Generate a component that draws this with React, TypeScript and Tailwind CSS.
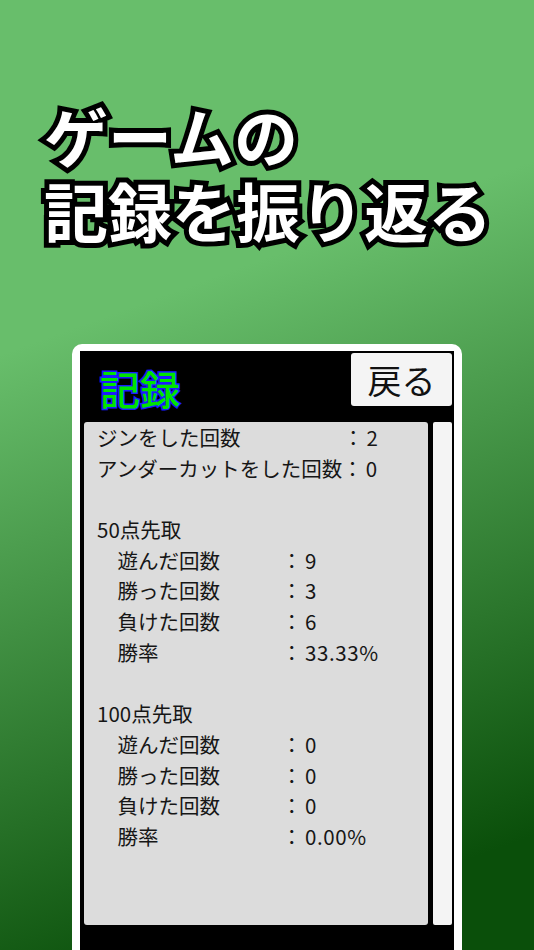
type Row = { label: string; value?: string };

const rows: Row[] = [
  { label: 'ジンをした回数　　　　　：', value: '2' },
  { label: 'アンダーカットをした回数：', value: '0' },
  { label: '' },
  { label: '50点先取' },
  { label: '　遊んだ回数　　　：', value: '9' },
  { label: '　勝った回数　　　：', value: '3' },
  { label: '　負けた回数　　　：', value: '6' },
  { label: '　勝率　　　　　　：', value: '33.33%' },
  { label: '' },
  { label: '100点先取' },
  { label: '　遊んだ回数　　　：', value: '0' },
  { label: '　勝った回数　　　：', value: '0' },
  { label: '　負けた回数　　　：', value: '0' },
  { label: '　勝率　　　　　　：', value: '0.00%' },
];

export default function App() {
  return (
    <div
      className="h-[950px] w-[534px] overflow-hidden flex flex-col bg-[linear-gradient(160deg,#68be6b_31%,#0a4f0a_90%)]"
      style={{ fontFamily: '"Noto Sans CJK JP", "Noto Sans", sans-serif' }}
    >
      {/* headline with black outline */}
      <div className="pt-[97px] pl-[44px] text-[64px] font-bold text-white [-webkit-text-stroke:10px_black] [paint-order:stroke_fill]">
        <div className="h-[75px] leading-[75px]">ゲームの</div>
        <div className="h-[75px] leading-[75px]">記録を振り返る</div>
      </div>

      {/* phone frame */}
      <div className="mt-[97px] mx-[72px] flex-1 bg-white rounded-t-[10px] px-2 pt-[7px] flex flex-col">
        <div className="flex-1 bg-black flex flex-col">
          <div className="h-[71px] flex justify-between items-start pl-[20px] pr-[2px] pt-[2px]">
            <span className="mt-[15px] text-[40px] leading-[40px] font-medium text-[#00e400] [-webkit-text-stroke:3px_#1b1bff] [paint-order:stroke_fill]">
              記録
            </span>
            <button className="w-[101px] h-[53px] bg-[#f4f4f4] rounded-[3px] text-[34px] leading-none text-[#111]">
              戻る
            </button>
          </div>

          <div className="flex gap-[5px] pl-[4px] pr-[2px]">
            <div className="w-[344px] h-[503px] bg-[#dcdcdc] rounded-[3px] pl-[13px] text-[20.5px] leading-[30.7px] text-[#161616]">
              {rows.map((r, i) => (
                <div key={i} className="h-[30.7px] whitespace-pre">
                  {r.label}
                  {r.value && <span className="pl-[3px] tracking-[0.6px]">{r.value}</span>}
                </div>
              ))}
            </div>
            <div className="w-[19px] h-[503px] bg-[#f4f4f4] rounded-[2px]" />
          </div>
        </div>
      </div>
    </div>
  );
}
